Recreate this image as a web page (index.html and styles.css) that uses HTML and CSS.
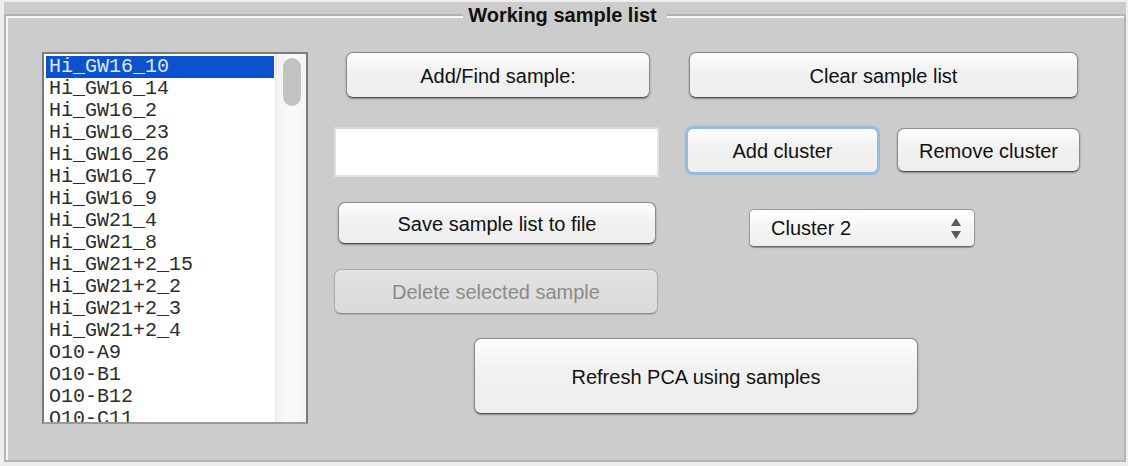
FILE: index.html
```html
<!DOCTYPE html>
<html>
<head>
<meta charset="utf-8">
<title>Working sample list</title>
<link rel="stylesheet" href="styles.css">
</head>
<body>
<div class="window">
  <div class="panel">
    <fieldset class="group">
      <legend class="group-title" align="center">Working sample list</legend>
      <div class="group-body">
        <div class="listbox">
          <ul class="items">
            <li class="item selected">Hi_GW16_10</li>
            <li class="item">Hi_GW16_14</li>
            <li class="item">Hi_GW16_2</li>
            <li class="item">Hi_GW16_23</li>
            <li class="item">Hi_GW16_26</li>
            <li class="item">Hi_GW16_7</li>
            <li class="item">Hi_GW16_9</li>
            <li class="item">Hi_GW21_4</li>
            <li class="item">Hi_GW21_8</li>
            <li class="item">Hi_GW21+2_15</li>
            <li class="item">Hi_GW21+2_2</li>
            <li class="item">Hi_GW21+2_3</li>
            <li class="item">Hi_GW21+2_4</li>
            <li class="item">O10-A9</li>
            <li class="item">O10-B1</li>
            <li class="item">O10-B12</li>
            <li class="item">O10-C11</li>
          </ul>
          <div class="scrollbar"><div class="thumb"></div></div>
        </div>
        <div class="controls">
          <div class="row row-1">
            <button class="btn btn-find">Add/Find sample:</button>
            <button class="btn btn-clear">Clear sample list</button>
          </div>
          <div class="row row-2">
            <input class="field" type="text" value="">
            <button class="btn btn-add focused">Add cluster</button>
            <button class="btn btn-remove">Remove cluster</button>
          </div>
          <div class="row row-3">
            <button class="btn btn-save">Save sample list to file</button>
            <div class="combo">
              <span class="combo-label">Cluster 2</span>
              <svg class="combo-arrows" width="12" height="22" viewBox="0 0 12 22">
                <polygon points="6,0 11,8 1,8" fill="#5a5a5a"/>
                <polygon points="1,13 11,13 6,21" fill="#5a5a5a"/>
              </svg>
            </div>
          </div>
          <div class="row row-4">
            <button class="btn btn-delete" disabled>Delete selected sample</button>
          </div>
          <div class="row row-5">
            <button class="btn btn-refresh">Refresh PCA using samples</button>
          </div>
        </div>
      </div>
    </fieldset>
  </div>
</div>
</body>
</html>
```

FILE: styles.css
```css
html, body {
  margin: 0;
  padding: 0;
}

body {
  background: #eeeeee;
  font-family: "Liberation Sans", Arial, sans-serif;
  font-size: 20px;
  color: #111111;
}

.window {
  height: 466px;
  box-sizing: border-box;
  padding: 2px 2px 4px 4px;
}

.panel {
  height: 100%;
  box-sizing: border-box;
  padding-top: 1px;
  background: #cccccc;
  display: flex;
}

.group {
  flex: 1;
  min-width: 0;
  margin: 0;
  padding: 0;
  border: 2px solid #b3b3b3;
  box-shadow: inset 2px 2px 0 #f7f7f7;
}

.group-title {
  margin: 0 auto;
  padding: 0 10px 0 5px;
  font-weight: bold;
  font-size: 20px;
  line-height: 24px;
  background: #cccccc;
  color: #111111;
}

.group-body {
  display: flex;
  align-items: flex-start;
  padding: 25px 0 0 36px;
}

/* list box */
.listbox {
  width: 266px;
  height: 372px;
  box-sizing: border-box;
  border: 2px solid #7b7b7b;
  border-bottom-color: #9a9a9a;
  background: #ffffff;
  display: flex;
  flex: none;
}

.items {
  flex: 1;
  list-style: none;
  margin: 0;
  padding: 2px 1px 0 2px;
  overflow: hidden;
}

.item {
  font-family: "Liberation Mono", "Courier New", monospace;
  font-size: 20px;
  line-height: 22px;
  height: 22px;
  padding-left: 3px;
  color: #2c2c2c;
  white-space: nowrap;
}

.item.selected {
  background: #0b52cf;
  color: #dce8ff;
}

.scrollbar {
  width: 31px;
  flex: none;
  background: linear-gradient(to right, #e2e2e2 0, #f3f3f3 2px, #fbfbfb 50%, #f3f3f3 100%);
  padding: 4px 0 0 8px;
  box-sizing: border-box;
}

.thumb {
  width: 18px;
  height: 48px;
  border-radius: 9px;
  background: #c3c3c3;
}

/* controls */
.controls {
  display: flex;
  flex-direction: column;
}

.row {
  display: flex;
  align-items: flex-start;
}

.row-2 { margin-top: 29px; }
.row-3 { margin-top: 25px; }
.row-4 { margin-top: 22px; }
.row-5 { margin-top: 24px; }

.btn {
  box-sizing: border-box;
  margin: 0;
  padding: 0;
  font-family: "Liberation Sans", Arial, sans-serif;
  font-size: 20px;
  color: #111111;
  border: 1px solid #8a8a8a;
  border-bottom-color: #4f4f4f;
  border-radius: 7px;
  background: linear-gradient(#fdfdfd, #f1f1f1 45%, #eeeeee);
  box-shadow: 0 1px 2px rgba(0, 0, 0, 0.35);
  display: flex;
  align-items: center;
  justify-content: center;
  padding-top: 2px;
}

.btn-find { margin-left: 38px; width: 304px; height: 46px; }
.btn-clear { margin-left: 39px; width: 389px; height: 46px; }

.field {
  margin: 0 0 0 26px;
  width: 325px;
  height: 50px;
  box-sizing: border-box;
  border: 2px solid #e0e0e0;
  border-top-color: #d8d8d8;
  background: #ffffff;
  padding: 0 6px;
  font-family: "Liberation Sans", Arial, sans-serif;
  font-size: 20px;
}

.btn-add { margin-left: 27px; width: 193px; height: 47px; }
.btn.focused {
  border: 2px solid #8fbde9;
  box-shadow: 0 0 1px 1px rgba(110, 165, 225, 0.55);
}
.btn-remove { margin-left: 18px; margin-top: 1px; width: 183px; height: 44px; }

.btn-save { margin-left: 30px; width: 318px; height: 42px; }

.combo {
  margin-left: 93px;
  margin-top: 7px;
  width: 226px;
  height: 38px;
  box-sizing: border-box;
  border: 1px solid #9a9a9a;
  border-bottom-color: #6a6a6a;
  border-radius: 5px;
  background: linear-gradient(#ffffff, #f5f5f5 50%, #efefef);
  box-shadow: 0 1px 1px rgba(0, 0, 0, 0.3);
  display: flex;
  align-items: center;
  justify-content: space-between;
  padding: 1px 12px 0 21px;
}

.combo-label {
  font-size: 20px;
  color: #111111;
}

.combo-arrows {
  display: block;
  margin-top: 1px;
}

.btn-delete {
  margin-left: 26px;
  width: 324px;
  height: 45px;
  color: #8b8b8b;
  border-color: #ababab;
  border-bottom-color: #8e8e8e;
  background: linear-gradient(#e2e2e2, #dadada);
  box-shadow: 0 1px 1px rgba(0, 0, 0, 0.15);
}

.btn-refresh { margin-left: 166px; width: 444px; height: 76px; }
```
